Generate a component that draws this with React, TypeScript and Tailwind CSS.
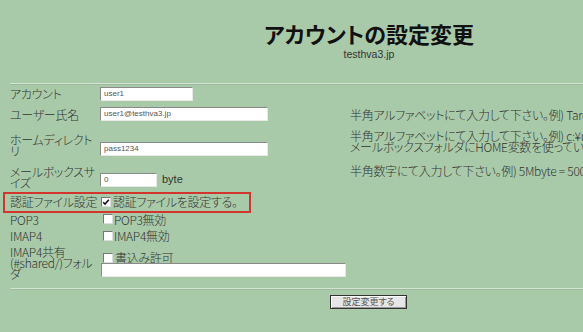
import React from "react";

function Check({ checked = false }: { checked?: boolean }) {
  return (
    <span className="inline-flex items-center justify-center w-[10px] h-[10px] bg-white border border-t-[#777] border-l-[#777] border-b-[#ddd] border-r-[#ddd] shrink-0">
      {checked && (
        <svg width="8" height="8" viewBox="0 0 8 8">
          <path d="M1.2 4.2 L3 6 L6.8 1.8" fill="none" stroke="#111" strokeWidth="1.6" />
        </svg>
      )}
    </span>
  );
}

function Field({ value, w }: { value: string; w: string }) {
  return (
    <div
      className={`${w} h-[14px] bg-white border border-t-[#8a8a8a] border-l-[#8a8a8a] border-b-[#e8e8e8] border-r-[#e8e8e8] text-[8px] leading-[12px] pl-[3px] text-[#555] font-['Liberation_Sans',sans-serif] tracking-normal`}
    >
      {value}
    </div>
  );
}

export default function App() {
  return (
    <div className="w-[583px] h-[332px] overflow-hidden bg-[#a9caa9] text-[#333] font-['Noto_Sans_CJK_JP',sans-serif] [font-feature-settings:'palt']">
      <div className="w-[728px] pl-[10px]">
        <div className="text-center pt-[19px]">
          <h1 className="text-[22px] leading-[28px] font-bold text-[#111]">アカウントの設定変更</h1>
          <div className="mt-[1px] text-[10.5px] leading-[12px] text-[#333] font-['Liberation_Sans',sans-serif]">testhva3.jp</div>
        </div>
        <div className="mt-[23px] h-[2px] border-t border-t-[#d4e4d4] border-b border-b-[#9cba9c]" />

        <div className="grid grid-cols-[90px_250px_1fr] text-[12px] leading-[11px] font-light tracking-[-0.3px] -mt-[1px]">
          {/* row 1 */}
          <div className="h-[18px] flex items-center">アカウント</div>
          <div className="flex items-center pt-[1px]"><Field value="user1" w="w-[93px]" /></div>
          <div />

          {/* row 2 */}
          <div className="h-[24px] flex items-center">ユーザー氏名</div>
          <div className="flex items-center"><Field value="user1@testhva3.jp" w="w-[168px]" /></div>
          <div className="flex items-center whitespace-nowrap">半角アルファベットにて入力して下さい。例) Taro Yamada</div>

          {/* row 3 */}
          <div className="h-[37px] flex items-center pr-[2px]">ホームディレクトリ</div>
          <div className="flex items-center pt-[8px]"><Field value="pass1234" w="w-[168px]" /></div>
          <div className="flex flex-col justify-center whitespace-nowrap pb-[7px]">
            <span>半角アルファベットにて入力して下さい。例) c:¥users¥user1</span>
            <span>メールボックスフォルダにHOME変数を使っている場合に使用します。</span>
          </div>

          {/* row 4 */}
          <div className="h-[28px] flex items-center">メールボックスサイズ</div>
          <div className="flex items-center gap-[5px] pt-[5px]">
            <Field value="0" w="w-[57px]" />
            <span className="font-['Liberation_Sans',sans-serif] text-[11px] tracking-normal">byte</span>
          </div>
          <div className="flex items-center whitespace-nowrap pb-[14px]">半角数字にて入力して下さい。例) 5Mbyte = 5000000</div>

          {/* row 5 */}
          <div className="relative h-[21px] flex items-center">
            認証ファイル設定
            <div className="absolute left-[-7px] top-[1px] w-[248px] h-[21px] border-2 border-[#d2352b]" />
          </div>
          <div className="flex items-center gap-[2px] pl-[1px]">
            <Check checked />
            <span>認証ファイルを設定する。</span>
          </div>
          <div />

          {/* row 6 */}
          <div className="h-[14px] flex items-center">POP3</div>
          <div className="flex items-center gap-[1px] pl-[3px]">
            <Check />
            <span>POP3無効</span>
          </div>
          <div />

          {/* row 7 */}
          <div className="h-[19px] flex items-center">IMAP4</div>
          <div className="flex items-center gap-[1px] pl-[3px]">
            <Check />
            <span>IMAP4無効</span>
          </div>
          <div />

          {/* row 8 */}
          <div className="h-[35px] flex items-center">IMAP4共有(#shared/)フォルダ</div>
          <div className="flex flex-col justify-center pl-[1px] pt-[4px]">
            <div className="flex items-center gap-[2px] pl-[2px] h-[11px]">
              <Check />
              <span>書込み許可</span>
            </div>
            <Field value="" w="w-[245px]" />
          </div>
          <div />
        </div>

        <div className="mt-[8px] h-[2px] border-t border-t-[#d4e4d4] border-b border-b-[#9cba9c]" />

        <div className="flex pl-[320px] pt-[5px]">
          <button className="w-[77px] h-[14px] bg-[#e6e6e6] border border-[#333] shadow-[inset_1px_1px_0_#fff,inset_-1px_-1px_0_#999] text-[9px] leading-[12px] text-[#555]">
            設定変更する
          </button>
        </div>
      </div>
    </div>
  );
}
